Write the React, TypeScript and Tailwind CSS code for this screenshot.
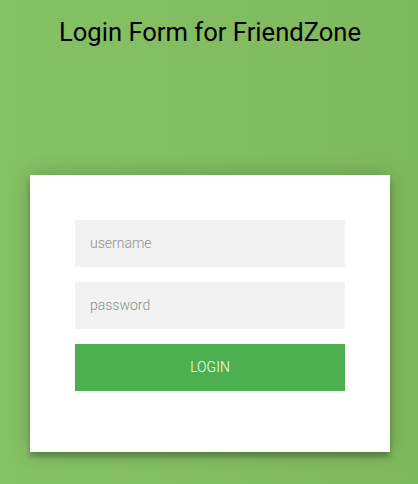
export default function App() {
  return (
    <div className="min-h-screen bg-[linear-gradient(to_right,#86c165,#7fb95d)] font-['Roboto',sans-serif]">
      <h1 className="pt-4 pl-[2px] text-center text-[25.6px] leading-8 font-normal text-black">
        Login Form for FriendZone
      </h1>
      <div className="mt-[127px] ml-[30px] w-[360px] bg-white p-[45px] pb-[61px] shadow-[0_0_20px_0_rgba(0,0,0,0.2),0_5px_5px_0_rgba(0,0,0,0.24)]">
        <form className="flex flex-col gap-[15px]" onSubmit={(e) => e.preventDefault()}>
          <input
            type="text"
            placeholder="username"
            className="h-[47px] w-full bg-[#f2f2f2] px-[15px] pb-[2px] text-sm font-light outline-none placeholder:text-[#8f8f8f]"
          />
          <input
            type="password"
            placeholder="password"
            className="h-[47px] w-full bg-[#f2f2f2] px-[15px] pb-[2px] text-sm font-light outline-none placeholder:text-[#8f8f8f]"
          />
          <button className="h-[47px] w-full bg-[#4caf50] pb-[2px] text-sm font-light uppercase text-white">
            login
          </button>
        </form>
      </div>
    </div>
  )
}
